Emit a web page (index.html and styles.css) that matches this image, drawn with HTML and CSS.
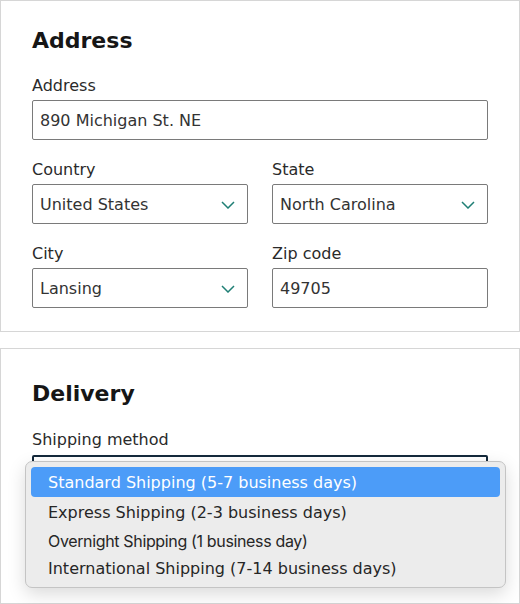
FILE: index.html
```html
<!DOCTYPE html>
<html lang="en">
<head>
    <meta charset="UTF-8">
    <meta name="viewport" content="width=device-width, initial-scale=1.0">
    <title>Checkout - Address and Delivery</title>
    <link rel="stylesheet" href="styles.css">
</head>
<body>

    <!-- Address card -->
    <section class="card card-address">
        <h2>Address</h2>
        <div class="field">
            <label>Address</label>
            <div class="input">890 Michigan St. NE</div>
        </div>
        <div class="row">
            <div class="field">
                <label>Country</label>
                <div class="input select">United States
                    <svg class="chevron" viewBox="0 0 14 8"><path d="M1 1l6 6 6-6"/></svg>
                </div>
            </div>
            <div class="field">
                <label>State</label>
                <div class="input select">North Carolina
                    <svg class="chevron" viewBox="0 0 14 8"><path d="M1 1l6 6 6-6"/></svg>
                </div>
            </div>
        </div>
        <div class="row">
            <div class="field">
                <label>City</label>
                <div class="input select">Lansing
                    <svg class="chevron" viewBox="0 0 14 8"><path d="M1 1l6 6 6-6"/></svg>
                </div>
            </div>
            <div class="field">
                <label>Zip code</label>
                <div class="input">49705</div>
            </div>
        </div>
    </section>

    <!-- Delivery card -->
    <section class="card card-delivery">
        <h2>Delivery</h2>
        <div class="field">
            <label>Shipping method</label>
            <div class="dropdown-wrap">
                <div class="input select focused"></div>
                <!-- open option list -->
                <ul class="dropdown">
                    <li class="active">Standard Shipping (5-7 business days)</li>
                    <li>Express Shipping (2-3 business days)</li>
                    <li class="narrow">Overnight Shipping (1 business day)</li>
                    <li>International Shipping (7-14 business days)</li>
                </ul>
            </div>
        </div>
    </section>

</body>
</html>
```

FILE: styles.css
```css
body {
    margin: 0;
    background-color: #fff;
    font-family: "DejaVu Sans", "Noto Sans", sans-serif;
    color: #222;
}
.card {
    border: 1px solid #d6d6d6;
    padding: 25px 31px 23px;
}
.card-delivery {
    margin-top: 16px;
    padding-top: 30px;
    height: 201px;
}
h2 {
    margin: 0 0 20px;
    font-size: 22px;
    line-height: 30px;
    font-weight: bold;
    color: #161616;
}
.card-delivery h2 {
    margin-bottom: 21px;
}
.field {
    display: flex;
    flex-direction: column;
}
.field + .row,
.row + .row {
    margin-top: 20px;
}
.row {
    display: grid;
    grid-template-columns: 1fr 1fr;
    gap: 24px;
}
label {
    font-size: 16px;
    line-height: 20px;
    margin-bottom: 4px;
    color: #2a2a2a;
}
.card-delivery label {
    margin-bottom: 5px;
}
.input {
    position: relative;
    box-sizing: border-box;
    height: 40px;
    border: 1px solid #7a7a7a;
    border-radius: 2px;
    padding: 0 7px;
    font-size: 16px;
    line-height: 40px;
    color: #333;
}
.select {
    padding-right: 40px;
}
.chevron {
    position: absolute;
    right: 12px;
    top: 16px;
    width: 14px;
    height: 8px;
    fill: none;
    stroke: #1f7f75;
    stroke-width: 1.5;
}
.focused {
    border: 2px solid #13283a;
}
.dropdown-wrap {
    position: relative;
}
.dropdown {
    position: absolute;
    top: 6px;
    left: -7px;
    box-sizing: border-box;
    width: 481px;
    margin: 0;
    padding: 5px;
    list-style: none;
    background: #ececec;
    border: 1px solid #c4c4c4;
    border-radius: 7px;
    box-shadow: 0 6px 18px rgba(0, 0, 0, 0.15);
    font-size: 16px;
}
.dropdown li {
    height: 28px;
    line-height: 30px;
    padding: 0 17px;
    color: #262626;
    border-radius: 4px;
}
.dropdown li.active {
    height: 30px;
    line-height: 32px;
    background: #4c9cf8;
    color: #fff;
    margin-bottom: 1px;
}
.dropdown li.narrow {
    font-family: Inter, "Liberation Sans", sans-serif;
    letter-spacing: -0.35px;
}
```
